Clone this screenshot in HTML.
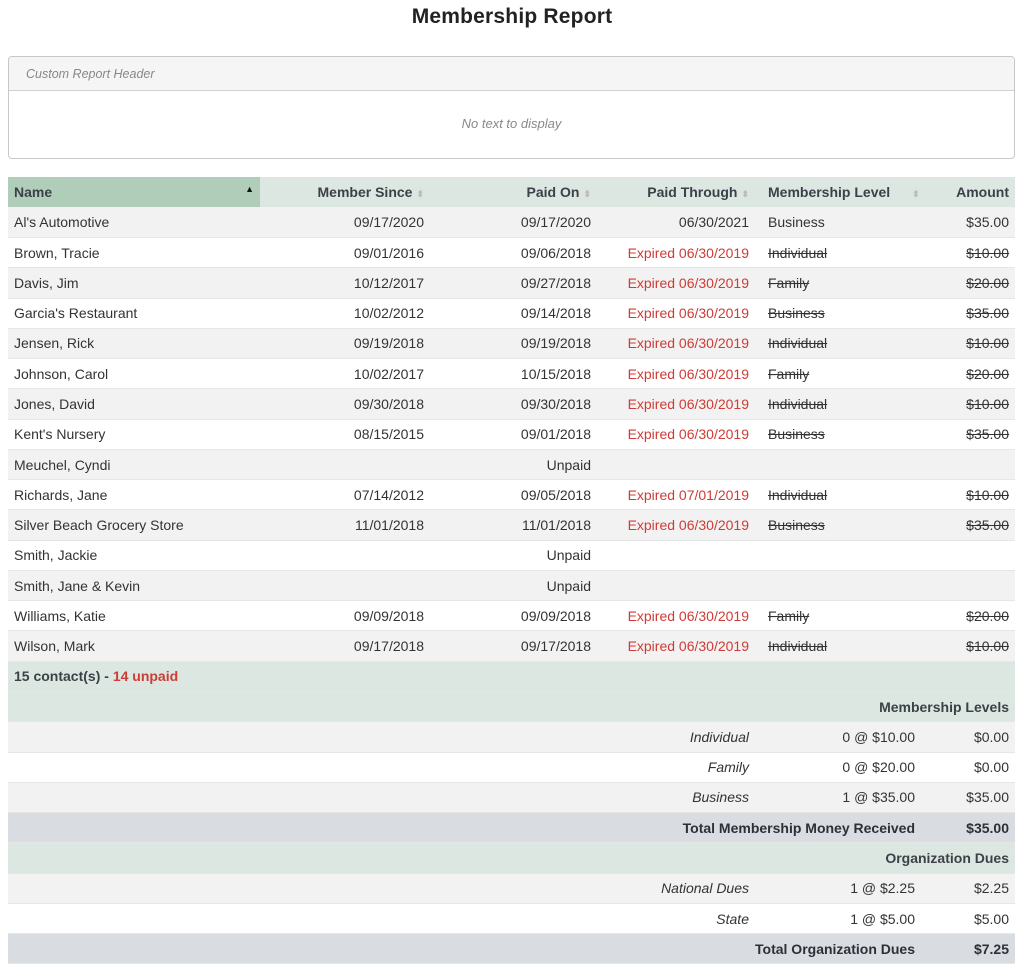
<!DOCTYPE html>
<html><head><meta charset="utf-8"><style>
body{margin:0;background:#fff;font-family:"Liberation Sans",Arial,sans-serif;color:#333;font-size:14px;}
h1{margin:0;position:absolute;top:5px;left:0;width:1024px;text-align:center;font-size:21px;font-weight:bold;color:#222;letter-spacing:0.2px}
.box{position:absolute;left:8px;top:56px;width:1005px;height:101px;border:1px solid #c8c8c8;border-radius:4px;overflow:hidden}
.bh{height:33px;background:#f5f5f5;border-bottom:1px solid #d0d0d0;font-style:italic;color:#888;font-size:12.5px;line-height:34px;padding-left:17px}
.bb{text-align:center;font-style:italic;color:#888;font-size:13px;line-height:66px}
table{position:absolute;left:8px;top:177px;width:1007px;border-collapse:collapse;table-layout:fixed}
td,th{height:30.27px;padding:0 6px;white-space:nowrap;border-bottom:1px solid #e6e6e6;box-sizing:border-box}
th{background:#dde7e1;font-weight:bold;text-align:right;color:#3c4148;border:none}
th.s{background:#b0cdb9;text-align:left}
.ic{color:#bbb;font-size:9px;margin-left:4px}
tbody tr:nth-child(odd) td{background:#f2f2f2}
.r{text-align:right}
.red{color:#cf3b35}
.lv{padding-left:13px}
.x{text-decoration:line-through}
.g td{background:#dde7e1!important;font-weight:bold;color:#3c4148}
.t td{background:#d9dce1!important;font-weight:bold;color:#2c3038}
.i{font-style:italic}
.c{padding-right:10px}
</style></head><body>
<h1>Membership Report</h1>
<div class="box"><div class="bh">Custom Report Header</div><div class="bb">No text to display</div></div>
<table>
<colgroup><col style="width:252px"><col style="width:170px"><col style="width:167px"><col style="width:158px"><col style="width:170px"><col style="width:90px"></colgroup>
<thead><tr><th class="s">Name<span style="float:right;font-size:9px;color:#111">▲</span></th><th>Member Since<span class="ic">⬍</span></th><th>Paid On<span class="ic">⬍</span></th><th>Paid Through<span class="ic">⬍</span></th><th style="text-align:left" class="lv">Membership Level<span class="ic" style="margin-left:22px">⬍</span></th><th>Amount</th></tr></thead>
<tbody>
<tr><td>Al's Automotive</td><td class="r">09/17/2020</td><td class="r">09/17/2020</td><td class="r">06/30/2021</td><td class="lv">Business</td><td class="r">$35.00</td></tr>
<tr><td>Brown, Tracie</td><td class="r">09/01/2016</td><td class="r">09/06/2018</td><td class="r red">Expired 06/30/2019</td><td class="lv x">Individual</td><td class="r x">$10.00</td></tr>
<tr><td>Davis, Jim</td><td class="r">10/12/2017</td><td class="r">09/27/2018</td><td class="r red">Expired 06/30/2019</td><td class="lv x">Family</td><td class="r x">$20.00</td></tr>
<tr><td>Garcia's Restaurant</td><td class="r">10/02/2012</td><td class="r">09/14/2018</td><td class="r red">Expired 06/30/2019</td><td class="lv x">Business</td><td class="r x">$35.00</td></tr>
<tr><td>Jensen, Rick</td><td class="r">09/19/2018</td><td class="r">09/19/2018</td><td class="r red">Expired 06/30/2019</td><td class="lv x">Individual</td><td class="r x">$10.00</td></tr>
<tr><td>Johnson, Carol</td><td class="r">10/02/2017</td><td class="r">10/15/2018</td><td class="r red">Expired 06/30/2019</td><td class="lv x">Family</td><td class="r x">$20.00</td></tr>
<tr><td>Jones, David</td><td class="r">09/30/2018</td><td class="r">09/30/2018</td><td class="r red">Expired 06/30/2019</td><td class="lv x">Individual</td><td class="r x">$10.00</td></tr>
<tr><td>Kent's Nursery</td><td class="r">08/15/2015</td><td class="r">09/01/2018</td><td class="r red">Expired 06/30/2019</td><td class="lv x">Business</td><td class="r x">$35.00</td></tr>
<tr><td>Meuchel, Cyndi</td><td></td><td class="r">Unpaid</td><td></td><td></td><td></td></tr>
<tr><td>Richards, Jane</td><td class="r">07/14/2012</td><td class="r">09/05/2018</td><td class="r red">Expired 07/01/2019</td><td class="lv x">Individual</td><td class="r x">$10.00</td></tr>
<tr><td>Silver Beach Grocery Store</td><td class="r">11/01/2018</td><td class="r">11/01/2018</td><td class="r red">Expired 06/30/2019</td><td class="lv x">Business</td><td class="r x">$35.00</td></tr>
<tr><td>Smith, Jackie</td><td></td><td class="r">Unpaid</td><td></td><td></td><td></td></tr>
<tr><td>Smith, Jane &amp; Kevin</td><td></td><td class="r">Unpaid</td><td></td><td></td><td></td></tr>
<tr><td>Williams, Katie</td><td class="r">09/09/2018</td><td class="r">09/09/2018</td><td class="r red">Expired 06/30/2019</td><td class="lv x">Family</td><td class="r x">$20.00</td></tr>
<tr><td>Wilson, Mark</td><td class="r">09/17/2018</td><td class="r">09/17/2018</td><td class="r red">Expired 06/30/2019</td><td class="lv x">Individual</td><td class="r x">$10.00</td></tr>
</tbody>
<tbody>
<tr class="g"><td colspan="6">15 contact(s) - <span class="red">14 unpaid</span></td></tr>
<tr class="g"><td colspan="6" class="r">Membership Levels</td></tr>
<tr style="background:#f2f2f2"><td colspan="4" class="r i" style="background:#f2f2f2">Individual</td><td class="r c" style="background:#f2f2f2">0 @ $10.00</td><td class="r" style="background:#f2f2f2">$0.00</td></tr>
<tr><td colspan="4" class="r i" style="background:#fff">Family</td><td class="r c" style="background:#fff">0 @ $20.00</td><td class="r" style="background:#fff">$0.00</td></tr>
<tr><td colspan="4" class="r i" style="background:#f2f2f2">Business</td><td class="r c" style="background:#f2f2f2">1 @ $35.00</td><td class="r" style="background:#f2f2f2">$35.00</td></tr>
<tr class="t"><td colspan="5" class="r c">Total Membership Money Received</td><td class="r">$35.00</td></tr>
<tr class="g"><td colspan="6" class="r">Organization Dues</td></tr>
<tr><td colspan="4" class="r i" style="background:#f2f2f2">National Dues</td><td class="r c" style="background:#f2f2f2">1 @ $2.25</td><td class="r" style="background:#f2f2f2">$2.25</td></tr>
<tr><td colspan="4" class="r i" style="background:#fff">State</td><td class="r c" style="background:#fff">1 @ $5.00</td><td class="r" style="background:#fff">$5.00</td></tr>
<tr class="t"><td colspan="5" class="r c">Total Organization Dues</td><td class="r">$7.25</td></tr>
</tbody>
</table>
</body></html>
